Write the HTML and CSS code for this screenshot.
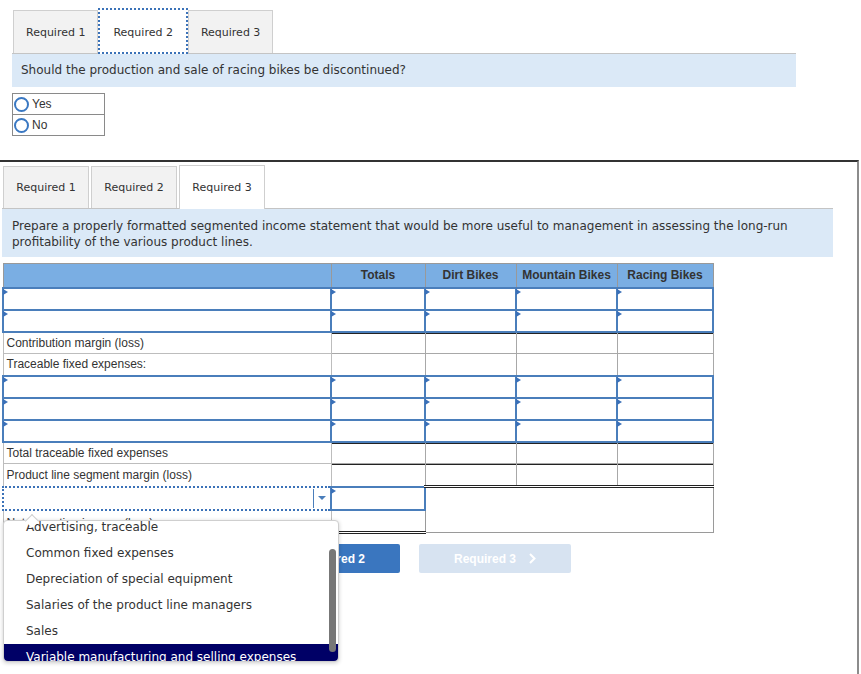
FILE: index.html
```html
<!DOCTYPE html>
<html>
<head>
<meta charset="utf-8">
<title>Segmented income statement</title>
<link rel="stylesheet" href="styles.css">
</head>
<body>
<div class="part1">
  <div class="tabs1">
    <div class="tab1">Required 1</div>
    <div class="tab1 active">Required 2</div>
    <div class="tab1">Required 3</div>
  </div>
  <div class="question">Should the production and sale of racing bikes be discontinued?</div>
  <table class="radios">
    <tr><td><span class="radio"></span>Yes</td></tr>
    <tr><td><span class="radio"></span>No</td></tr>
  </table>
</div>

<div class="part2">
  <div class="tabs2">
    <div class="tab2">Required 1</div>
    <div class="tab2">Required 2</div>
    <div class="tab2 active">Required 3</div>
  </div>
  <div class="instr">Prepare a properly formatted segmented income statement that would be more useful to management in assessing the long-run<br>profitability of the various product lines.</div>

  <div class="tablewrap">
    <table class="stmt">
      <colgroup>
        <col class="c-label"><col class="c-tot"><col class="c-dirt"><col class="c-mtn"><col class="c-race">
      </colgroup>
      <tr class="head"><th></th><th>Totals</th><th>Dirt Bikes</th><th>Mountain Bikes</th><th>Racing Bikes</th></tr>
      <tr class="row"><td class="in"></td><td class="in"></td><td class="in"></td><td class="in"></td><td class="in"></td></tr>
      <tr class="row"><td class="in"></td><td class="in"></td><td class="in"></td><td class="in"></td><td class="in"></td></tr>
      <tr class="row"><td class="lbl">Contribution margin (loss)</td><td class="num top"></td><td class="num top"></td><td class="num top"></td><td class="num top"></td></tr>
      <tr class="row"><td class="lbl">Traceable fixed expenses:</td><td class="num"></td><td class="num"></td><td class="num"></td><td class="num"></td></tr>
      <tr class="row"><td class="in"></td><td class="in"></td><td class="in"></td><td class="in"></td><td class="in"></td></tr>
      <tr class="row"><td class="in"></td><td class="in"></td><td class="in"></td><td class="in"></td><td class="in"></td></tr>
      <tr class="row"><td class="in"></td><td class="in"></td><td class="in"></td><td class="in"></td><td class="in"></td></tr>
      <tr class="row"><td class="lbl">Total traceable fixed expenses</td><td class="num top"></td><td class="num top"></td><td class="num top"></td><td class="num top"></td></tr>
      <tr class="row tall"><td class="lbl">Product line segment margin (loss)</td><td class="num top"></td><td class="num top"></td><td class="num top"></td><td class="num top"></td></tr>
      <tr class="row tall"><td class="dd"><div class="dd-box"><span class="dd-arrow"></span></div></td><td class="in"></td><td class="blank" colspan="3" rowspan="2"></td></tr>
      <tr class="row tall"><td class="lbl low">Net operating income (loss)</td><td class="num net"></td></tr>
    </table>

    <div class="popup">
      <ul class="opts">
        <li>Advertising, traceable</li>
        <li>Common fixed expenses</li>
        <li>Depreciation of special equipment</li>
        <li>Salaries of the product line managers</li>
        <li>Sales</li>
        <li class="sel">Variable manufacturing and selling expenses</li>
      </ul>
      <div class="thumb"></div>
    </div>
  </div>

  <div class="nav">
    <div class="btn prev"><svg class="chev" width="7" height="11" viewBox="0 0 7 11"><path d="M6 1 L1.5 5.5 L6 10" fill="none" stroke="#fff" stroke-width="2"/></svg><span>Required 2</span></div>
    <div class="btn next"><span>Required 3</span><svg class="chev" width="7" height="11" viewBox="0 0 7 11"><path d="M1 1 L5.5 5.5 L1 10" fill="none" stroke="#fff" stroke-width="2"/></svg></div>
  </div>
</div>
</body>
</html>
```

FILE: styles.css
```css
* { box-sizing: border-box; }

body {
  margin: 0;
  background: #fff;
  color: #333;
  font-family: "DejaVu Sans", Verdana, sans-serif;
  font-size: 11px;
}

/* ---------- part 1 ---------- */
.part1 {
  padding: 8px 0 0 12px;
}

.tabs1 {
  display: flex;
  align-items: flex-end;
  height: 45px;
  padding-left: 1px;
}

.tab1 {
  height: 43px;
  padding: 0 12px;
  display: flex;
  align-items: center;
  background: #f2f2f2;
  border: 1px solid #cfcfcf;
  border-bottom: 0;
  color: #333;
}

.tab1.active {
  height: 46px;
  margin-bottom: -1px;
  padding: 2px 13px 0;
  background: #fff;
  border: 2px dotted #3b72b8;
  position: relative;
  z-index: 1;
}

.question {
  width: 784px;
  height: 34px;
  border-top: 1px solid #c4c4c4;
  background: #dbe9f7;
  padding-left: 9px;
  line-height: 33px;
  font-size: 12px;
  color: #333;
}

.radios {
  margin-top: 6px;
  border-collapse: collapse;
  width: 93px;
  font-family: "Liberation Sans", Arial, sans-serif;
  font-size: 12px;
}

.radios td {
  border: 1px solid #8a8a8a;
  height: 21px;
  padding: 0 0 0 1px;
  color: #333;
}

.radio {
  display: inline-block;
  width: 15px;
  height: 15px;
  border: 2px solid #3a78c2;
  border-radius: 50%;
  vertical-align: -4px;
  margin-right: 3px;
}

/* ---------- part 2 ---------- */
.part2 {
  margin-top: 24px;
  width: 859px;
  min-height: 514px;
  border-top: 2px solid #333;
  border-right: 2px solid #8c8c8c;
}

.tabs2 {
  display: flex;
  align-items: flex-end;
  height: 46px;
  padding-left: 3px;
}

.tab2 {
  width: 86px;
  height: 42px;
  margin-right: 2px;
  display: flex;
  align-items: center;
  justify-content: center;
  background: #f2f2f2;
  border: 1px solid #cfcfcf;
  border-bottom: 0;
  color: #333;
}

.tab2.active {
  height: 44px;
  margin-bottom: -1px;
  background: #fff;
  position: relative;
  z-index: 1;
}

.instr {
  margin-left: 2px;
  width: 831px;
  border-top: 1px solid #c4c4c4;
  background: #dbe9f7;
  padding: 10px 8px 7px 10px;
  line-height: 15.5px;
  font-size: 12px;
  color: #333;
}

/* ---------- statement table ---------- */
.tablewrap {
  position: relative;
  margin: 6px 0 0 2px;
  width: 710px;
}

.stmt {
  border-collapse: collapse;
  table-layout: fixed;
  width: 710px;
  font-family: "Liberation Sans", Arial, sans-serif;
  font-size: 12px;
  color: #333;
}

.c-label { width: 328px; }
.c-tot { width: 94px; }
.c-dirt { width: 91px; }
.c-mtn { width: 101px; }
.c-race { width: 96px; }

.stmt th,
.stmt td {
  padding: 0;
  border: 1px solid #bdbdbd;
}

.stmt .head { height: 24px; }

.stmt th {
  background: #7aaee3;
  border-color: #999;
  font-weight: bold;
  text-align: center;
}

.stmt .row { height: 22px; }
.stmt .row.tall { height: 23px; }

.stmt td.lbl {
  padding-left: 3px;
  white-space: nowrap;
}

.stmt td.lbl.low {
  vertical-align: top;
  padding-top: 5px;
}

.stmt td.in {
  border: 2px solid #4a7ebb;
  position: relative;
}

.stmt td.in::before {
  content: "";
  position: absolute;
  top: 0;
  left: -1px;
  border-left: 5px solid #3a70b8;
  border-top: 3px solid transparent;
  border-bottom: 3px solid transparent;
}

.stmt td.num { border-color: #a8a8a8; }

.stmt td.top {
  background: linear-gradient(#222, #222) top left / 100% 1px no-repeat;
}

.stmt td.net {
  border-bottom: 3px double #222;
}

.stmt td.blank {
  border: 1px solid #9a9a9a;
  border-top: 3px double #222;
}

.stmt td.dd {
  border: 2px dotted #3b72b8;
}

.dd-box {
  display: flex;
  justify-content: flex-end;
  height: 19px;
}

.dd-arrow {
  width: 17px;
  border-left: 1px solid #4a7ebb;
  display: flex;
  align-items: center;
  justify-content: center;
}

.dd-arrow::after {
  content: "";
  border-top: 4px solid #4a7ebb;
  border-left: 4px solid transparent;
  border-right: 4px solid transparent;
}

/* ---------- dropdown popup ---------- */
.popup {
  position: absolute;
  left: 1px;
  top: 257px;
  width: 336px;
  height: 142px;
  background: #fff;
  border: 1px solid #cfcfcf;
  border-radius: 4px;
  box-shadow: 0 1px 4px rgba(0, 0, 0, 0.2);
  z-index: 5;
}

.popup::before {
  content: "";
  position: absolute;
  top: -5px;
  left: 23px;
  width: 9px;
  height: 9px;
  background: #fff;
  border-left: 1px solid #cfcfcf;
  border-top: 1px solid #cfcfcf;
  transform: rotate(45deg);
}

.opts {
  list-style: none;
  margin: 0;
  padding: 0;
  height: 140px;
  overflow: hidden;
  border-radius: 4px;
  font-family: "DejaVu Sans", Verdana, sans-serif;
  font-size: 12px;
  color: #333;
}

.opts li {
  height: 26px;
  line-height: 26px;
  padding-left: 22px;
  white-space: nowrap;
}

.opts li:first-child { margin-top: -7px; }

.opts li.sel {
  background: #000066;
  color: #fff;
}

.thumb {
  position: absolute;
  left: 325px;
  top: 28px;
  width: 7px;
  height: 103px;
  background: #777;
  border-radius: 4px;
}

/* ---------- nav buttons ---------- */
.nav {
  display: flex;
  gap: 19px;
  margin: 10px 0 0 248px;
}

.btn {
  width: 152px;
  height: 29px;
  border-radius: 2px;
  display: flex;
  align-items: center;
  justify-content: center;
  gap: 13px;
  color: #fff;
  font-family: "Liberation Sans", Arial, sans-serif;
  font-size: 12px;
  font-weight: bold;
}

.btn.prev { background: #3a76bf; }
.btn.next { background: #d7e3f1; }

.chev { display: block; }
```
